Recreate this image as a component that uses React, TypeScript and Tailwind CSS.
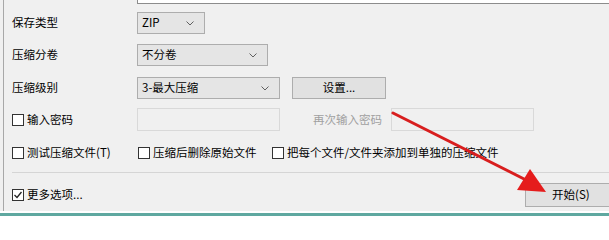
import type { ReactNode } from "react";

const font = { fontFamily: '"Noto Sans CJK SC", "Noto Sans", sans-serif' };

function Chevron() {
  return (
    <svg width="8" height="5" viewBox="0 0 8 5" className="shrink-0">
      <path d="M0.5 0.5 L4 4 L7.5 0.5" fill="none" stroke="#606060" strokeWidth="1" />
    </svg>
  );
}

function Combo({ value, width }: { value: string; width: string }) {
  return (
    <div
      className={`${width} h-[22px] flex items-center justify-between pl-[4px] pr-[10px] bg-[#e5e5e5] border border-[#adadad] text-black`}
    >
      <span>{value}</span>
      <Chevron />
    </div>
  );
}

function Check({ checked = false, children }: { checked?: boolean; children: ReactNode }) {
  return (
    <div className="flex items-center gap-[2px] text-black">
      <span className="w-[12px] h-[12px] border border-[#333] bg-white flex items-center justify-center">
        {checked && (
          <svg width="10" height="10" viewBox="0 0 10 10">
            <path d="M1.5 5 L4 7.5 L8.5 2" fill="none" stroke="#222" strokeWidth="1.3" />
          </svg>
        )}
      </span>
      <span className="ml-[1px]">{children}</span>
    </div>
  );
}

export default function App() {
  return (
    <div className="relative w-[609px] h-[216px] overflow-hidden bg-[#f0f0f0] text-[11.5px]" style={font}>
      <div className="ml-[3px] h-[211px] border-l border-[#a8a8a8] pl-[8px] flex flex-col">
        {/* tail of the path box above */}
        <div className="ml-[125px] h-[4px] bg-white border-l border-b border-[#8c8c8c]" />

        <div className="mt-[8px] flex items-center h-[22px]">
          <span className="w-[125px]">保存类型</span>
          <Combo value="ZIP" width="w-[68px]" />
        </div>

        <div className="mt-[10px] flex items-center h-[22px]">
          <span className="w-[125px]">压缩分卷</span>
          <Combo value="不分卷" width="w-[131px]" />
        </div>

        <div className="mt-[11px] flex items-center h-[22px]">
          <span className="w-[125px]">压缩级别</span>
          <Combo value="3-最大压缩" width="w-[143px]" />
          <button className="ml-[12px] w-[94px] h-[22px] bg-[#e1e1e1] border border-[#adadad]">
            设置...
          </button>
        </div>

        <div className="mt-[9px] flex items-center h-[23px]">
          <div className="w-[125px]">
            <Check>输入密码</Check>
          </div>
          <div className="w-[143px] h-[23px] border border-[#d9d9d9] bg-[#f0f0f0]" />
          <span className="ml-[33px] w-[78px] text-[#a0a0a0]">再次输入密码</span>
          <div className="w-[143px] h-[23px] border border-[#d9d9d9] bg-[#f0f0f0]" />
        </div>

        <div className="mt-[12px] flex items-center h-[20px]">
          <div className="w-[126px]">
            <Check>测试压缩文件(T)</Check>
          </div>
          <div className="w-[134px]">
            <Check>压缩后删除原始文件</Check>
          </div>
          <Check>把每个文件/文件夹添加到单独的压缩文件</Check>
        </div>

        <div className="mt-[9px] h-[1px] bg-[#d5d5d5]" />

        <div className="mt-[10px] flex items-center justify-between h-[24px]">
          <Check checked>更多选项...</Check>
          <button className="w-[90px] h-[24px] mr-[-6px] bg-[#e1e1e1] border border-[#adadad] text-left pl-[26px]">
            开始(S)
          </button>
        </div>
      </div>
      <div className="h-[2px] bg-white" />
      <div className="h-[3px] bg-[#5fa8a0]" />

      {/* red annotation arrow */}
      <svg className="absolute left-0 top-0 pointer-events-none" width="609" height="216">
        <line x1="393" y1="113" x2="528" y2="181" stroke="#d81e1e" strokeWidth="3" strokeLinecap="round" />
        <polygon points="546,192 517,190 530,169" fill="#e51c1c" />
      </svg>
    </div>
  );
}
